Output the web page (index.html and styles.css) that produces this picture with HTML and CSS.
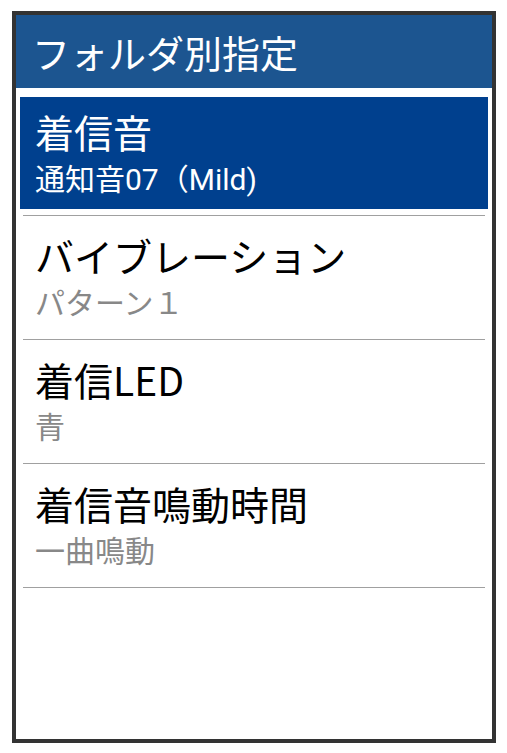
FILE: index.html
```html
<!DOCTYPE html>
<html lang="ja">
  <head>
    <meta charset="UTF-8" />
    <meta name="viewport" content="width=device-width, initial-scale=1.0" />
    <title>フォルダ別指定</title>
    <link rel="stylesheet" href="styles.css">
  </head>
  <body>
    <div class="screen">
      <div class="header">
        <h1>フォルダ別指定</h1>
      </div>

      <ul class="menu">
        <li class="menu-item selected">
          <div class="item-body">
            <span class="item-title">着信音</span>
            <span class="item-value">通知音07（Mild)</span>
          </div>
        </li>
        <li class="menu-item">
          <div class="item-body">
            <span class="item-title">バイブレーション</span>
            <span class="item-value">パターン１</span>
          </div>
        </li>
        <li class="menu-item">
          <div class="item-body">
            <span class="item-title">着信LED</span>
            <span class="item-value">青</span>
          </div>
        </li>
        <li class="menu-item">
          <div class="item-body">
            <span class="item-title">着信音鳴動時間</span>
            <span class="item-value">一曲鳴動</span>
          </div>
        </li>
      </ul>
    </div>
  </body>
</html>
```

FILE: styles.css
```css
* {
  margin: 0;
  padding: 0;
  box-sizing: border-box;
}

body {
  font-family: Roboto, "Noto Sans CJK JP", sans-serif;
  background: #fff;
}

.screen {
  margin: 11px 0 0 12px;
  width: 484px;
  height: 732px;
  border: 4px solid #333;
  background: #fff;
}

.header {
  height: 73px;
  background: #1c5590;
  display: flex;
  align-items: center;
  padding-left: 16px;
}

.header h1 {
  font-family: "Noto Sans CJK JP", sans-serif;
  font-weight: normal;
  font-size: 38px;
  line-height: 44px;
  color: #fff;
}

.menu {
  list-style: none;
  padding: 4px 7px 0;
}

.menu-item {
  height: 124px;
  padding: 5px 0 6px;
  border-bottom: 1px solid #a0a0a0;
}

.item-body {
  height: 112px;
  margin: 0 -3px;
  padding: 11px 0 0 15px;
  display: flex;
  flex-direction: column;
}

.item-title {
  font-family: "Noto Sans CJK JP", sans-serif;
  font-size: 39px;
  line-height: 46px;
  color: #000;
}

.item-value {
  font-size: 30px;
  line-height: 38px;
  margin-top: 7px;
  color: #888;
}

.selected .item-body {
  background: #00408e;
}

.selected .item-title,
.selected .item-value {
  color: #fff;
}
```
